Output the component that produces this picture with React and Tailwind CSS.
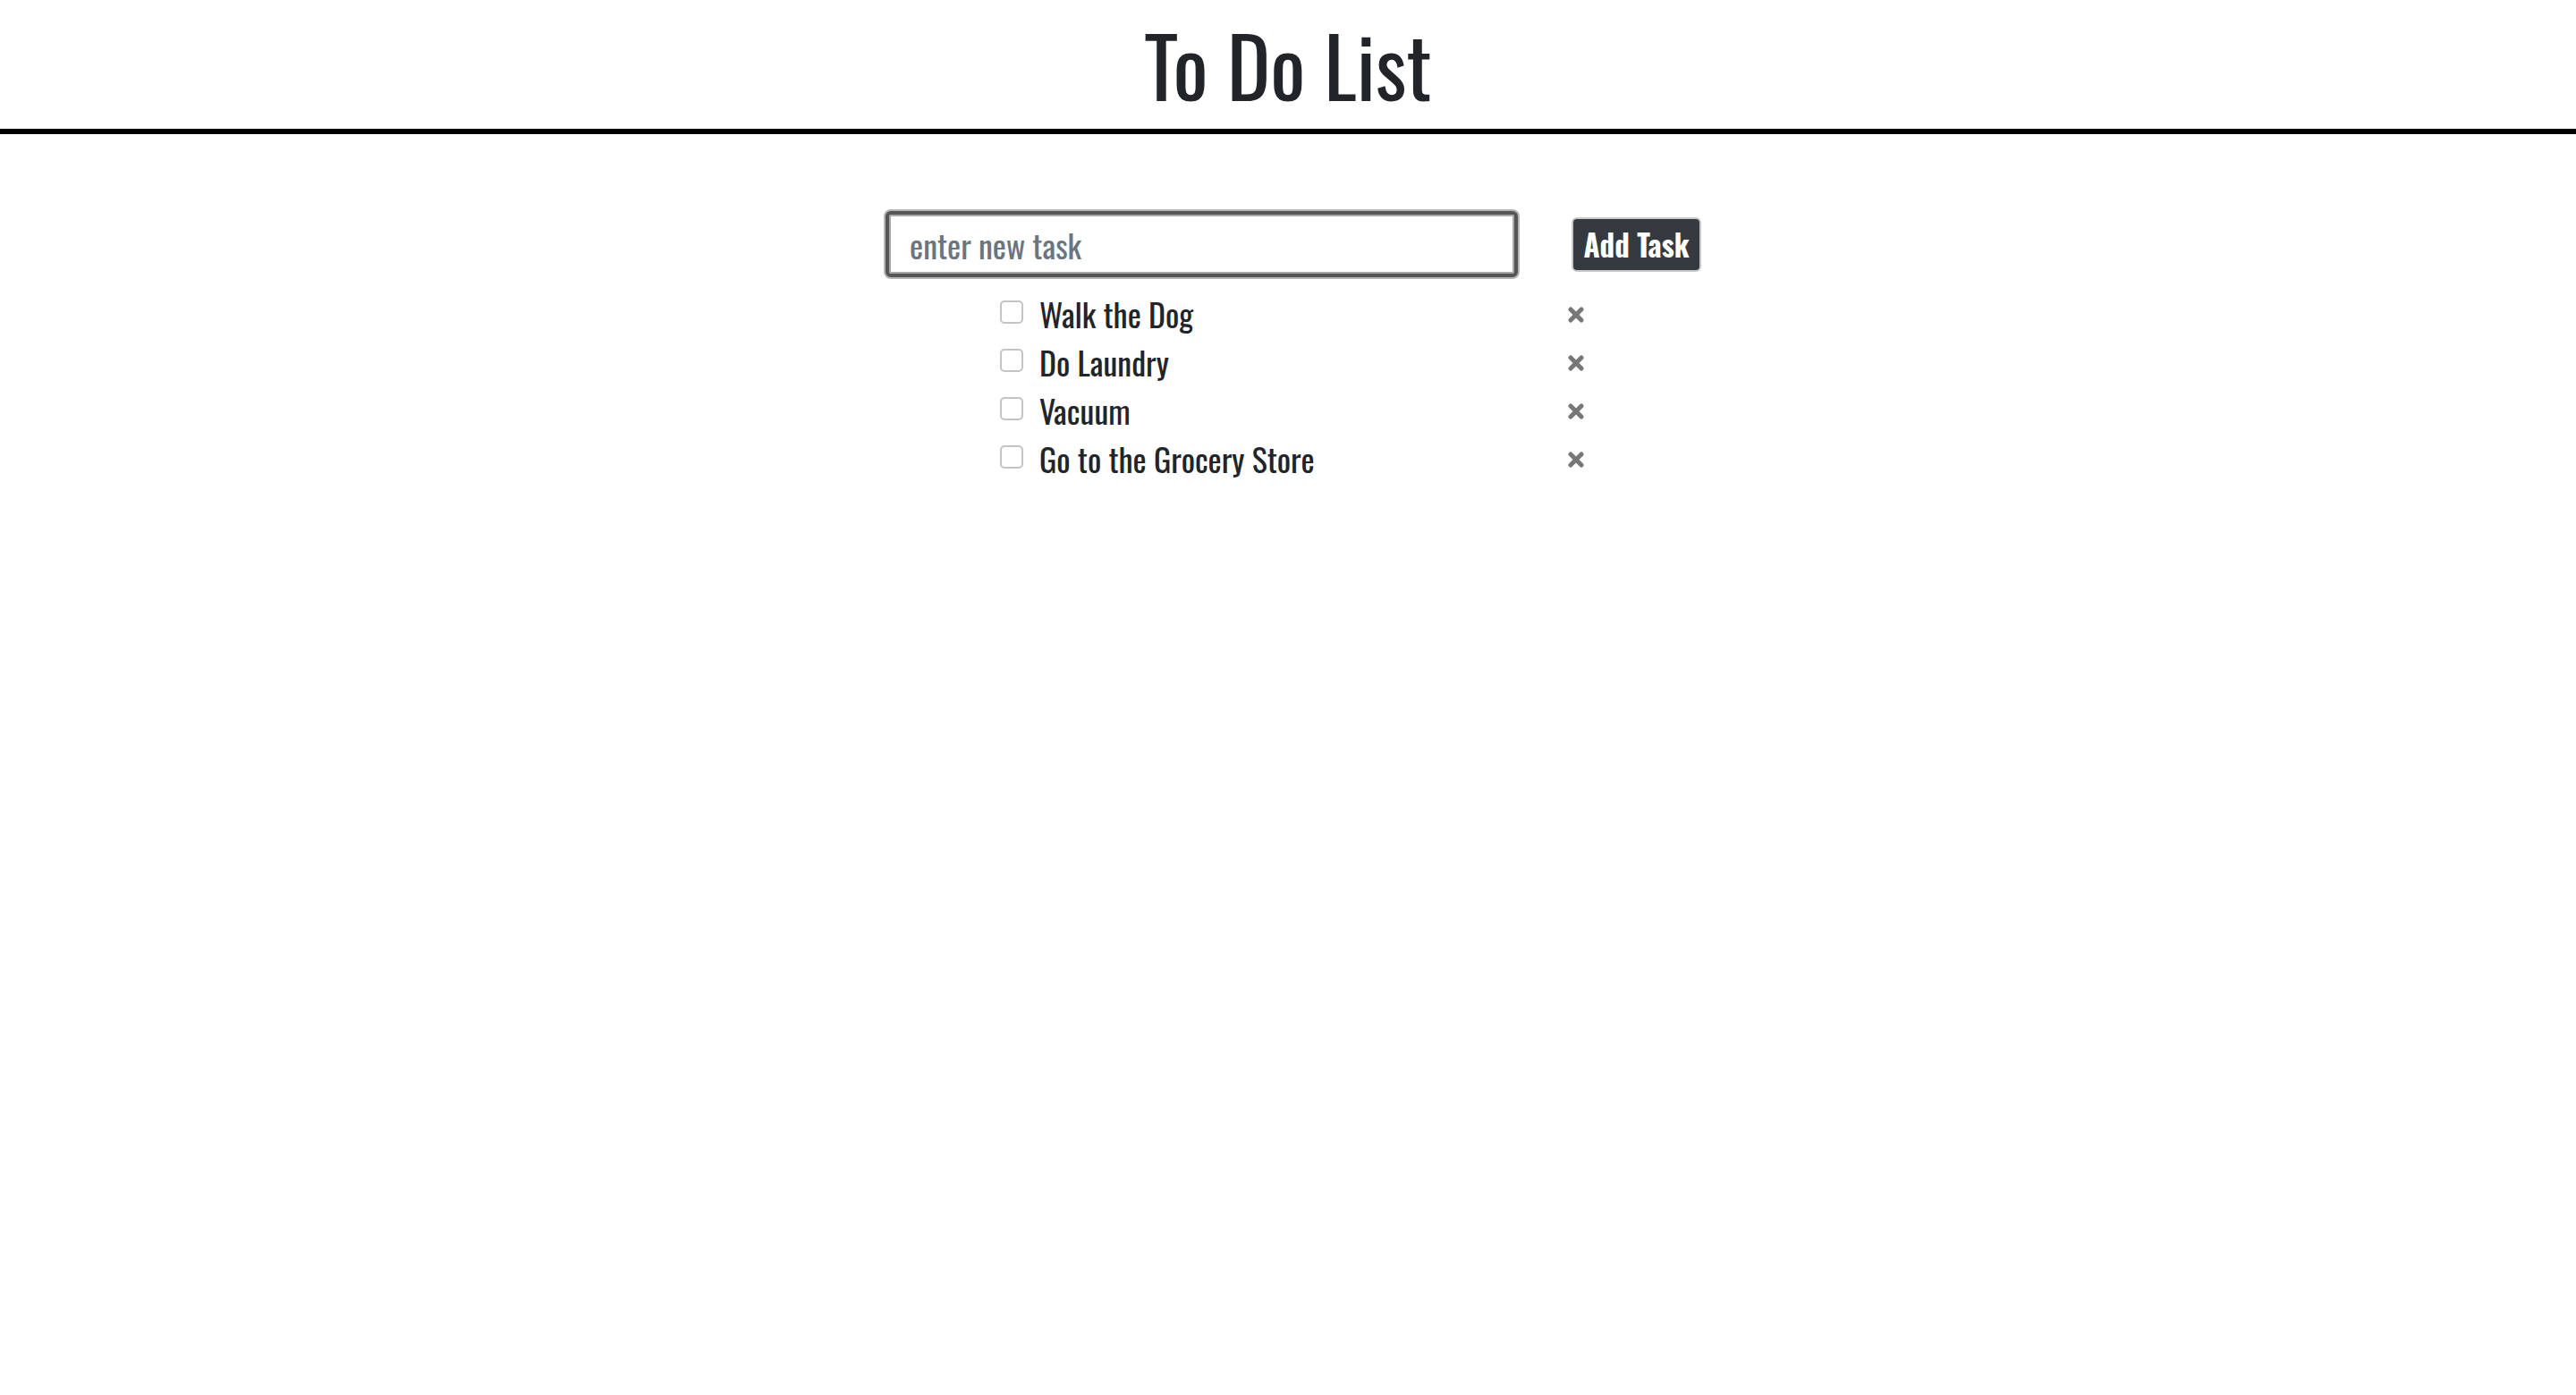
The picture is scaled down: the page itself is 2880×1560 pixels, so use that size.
import { useState } from "react";

const FONT = { fontFamily: '"Oswald", "Liberation Sans Narrow", "DejaVu Sans Condensed", "Liberation Sans", sans-serif' };

const initialTasks = ["Walk the Dog", "Do Laundry", "Vacuum", "Go to the Grocery Store"];

function RemoveIcon() {
  return (
    <svg width="18" height="18" viewBox="0 0 18 18" className="block">
      <path d="M3 3L15 15M15 3L3 15" stroke="#777" strokeWidth="5" strokeLinecap="round" />
    </svg>
  );
}

function TaskRow({ text, done, onToggle, onRemove }) {
  return (
    <li className="flex h-[54px] items-center">
      <input
        type="checkbox"
        checked={done}
        onChange={onToggle}
        className="m-0 h-[26px] w-[26px] shrink-0 appearance-none rounded-[5px] border-2 border-[#c4c4c4] bg-white"
      />
      <span className="ml-[18px] flex-1 pt-[4px] text-[36px] leading-none text-[#212529]">{text}</span>
      <button onClick={onRemove} className="mt-[6px] flex h-[18px] w-[18px] items-center justify-center">
        <RemoveIcon />
      </button>
    </li>
  );
}

export default function App() {
  const [tasks, setTasks] = useState(initialTasks.map((t) => ({ text: t, done: false })));
  const [draft, setDraft] = useState("");

  const addTask = () => {
    if (!draft.trim()) return;
    setTasks([...tasks, { text: draft.trim(), done: false }]);
    setDraft("");
  };

  return (
    <div className="min-h-[1560px] w-full bg-white" style={FONT}>
      <header className="border-b-[6px] border-black">
        <h1 className="h-[144px] pt-[12px] text-center text-[92px] font-normal leading-[120px] text-[#212529]">
          To Do List
        </h1>
      </header>

      <main className="ml-[calc(50%-450px)] w-[912px] pt-[86px]">
        <div className="flex items-center">
          <input
            value={draft}
            onChange={(e) => setDraft(e.target.value)}
            placeholder="enter new task"
            className="h-[74px] w-[707px] rounded-[6px] border-4 border-[#555] bg-white px-[23px] text-[36px] text-[#212529] shadow-[0_0_0_2px_#b5b5b5,inset_0_0_0_2px_#a8a8a8] outline-none placeholder:text-[#6c757d]"
          />
          <button
            onClick={addTask}
            className="ml-[60px] h-[61px] w-[145px] rounded-[6px] border-2 border-[#c8c8c8] bg-[#343a40] text-[33px] font-bold leading-none text-white"
          >
            Add Task
          </button>
        </div>

        <ul className="ml-[128px] mt-[12px] w-[653px]">
          {tasks.map((t, i) => (
            <TaskRow
              key={i}
              text={t.text}
              done={t.done}
              onToggle={() => setTasks(tasks.map((x, j) => (j === i ? { ...x, done: !x.done } : x)))}
              onRemove={() => setTasks(tasks.filter((_, j) => j !== i))}
            />
          ))}
        </ul>
      </main>
    </div>
  );
}
